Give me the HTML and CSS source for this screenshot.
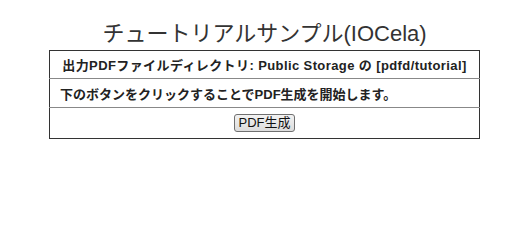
FILE: index.html
```html
<!DOCTYPE html>
<html lang="ja">
<head>
<meta charset="utf-8">
<title>チュートリアルサンプル(IOCela)</title>
<link rel="stylesheet" href="styles.css">
</head>
<body>
<h1 class="title">チュートリアルサンプル(IOCela)</h1>
<table class="panel">
  <tr><td class="cell center bold wide">出力PDFファイルディレクトリ: Public Storage の [pdfd/tutorial]</td></tr>
  <tr><td class="cell bold">下のボタンをクリックすることでPDF生成を開始します。</td></tr>
  <tr><td class="cell center"><button class="btn" type="button">PDF生成</button></td></tr>
</table>
</body>
</html>
```
FILE: styles.css
```css
body {
  margin: 8px;
  font-family: "Liberation Sans", "Noto Sans CJK JP", sans-serif;
  color: #333;
  background: #fff;
}
.title {
  margin: 12px 0 2px;
  text-align: center;
  font-size: 22px;
  font-weight: normal;
  line-height: 28px;
  color: #333;
}
.panel {
  width: 431px;
  margin: 0 auto;
  border-collapse: collapse;
  border: 1px solid #333;
}
.cell {
  border-top: 1px solid #888;
  padding: 0 10px;
  height: 28px;
  font-size: 13px;
  color: #222;
}
.wide {
  letter-spacing: 0.4px;
  white-space: nowrap;
  padding: 0 4px;
}
.panel tr:first-child .cell { border-top: none; height: 27px; }
.panel tr:last-child .cell { height: 30px; }
.center { text-align: center; }
.bold { font-weight: bold; }
.btn {
  font-family: "Liberation Sans", "Noto Sans CJK JP", sans-serif;
  font-size: 13px;
  color: #111;
  height: 18px;
  padding: 0 3px;
  line-height: 14px;
  background: linear-gradient(#f2f2f2, #dcdcdc);
  border: 1px solid #707070;
  border-radius: 3px;
}
```
